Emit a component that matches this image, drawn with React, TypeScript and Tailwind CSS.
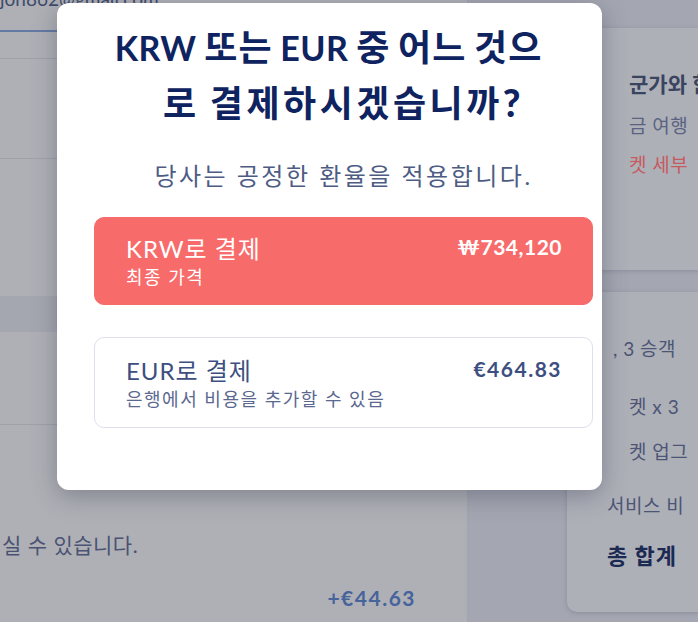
import { useState } from 'react';

const font = { fontFamily: 'Lato, "Noto Sans CJK KR", sans-serif' };

type Option = {
	id: string;
	title: string;
	note: string;
	price: string;
};

const options: Option[] = [
	{ id: 'krw', title: 'KRW로 결제', note: '최종 가격', price: '₩734,120' },
	{ id: 'eur', title: 'EUR로 결제', note: '은행에서 비용을 추가할 수 있음', price: '€464.83' },
];

function PageBehind() {
	return (
		<div className="flex h-full w-full">
			{/* left column */}
			<div className="flex h-full w-[468px] shrink-0 flex-col border-r border-[#a2a5af] bg-[#afb0b6]">
				<div className="h-[30px] overflow-hidden">
					<div className="-mt-[15px] text-[19px] text-[#3e4b6c]">jon862@gmail.com</div>
				</div>
				<div className="h-[2px] w-[300px] bg-[#6479a4]" />
				<div className="h-[27px] border-b border-[#9fa1aa]" />
				<div className="h-[100px] border-b border-[#9fa1aa]" />
				<div className="h-[137px]" />
				<div className="h-[36px] bg-[#a5a7b0]" />
				<div className="h-[93px] border-b border-[#9fa1aa]" />
				<div className="flex flex-1 flex-col pt-[104px]">
					<div className="pl-[2px] text-[21px] tracking-[0.5px] text-[#4a5372]">실 수 있습니다.</div>
					<div className="mt-[21px] pr-[51px] text-right text-[21px] font-bold tracking-[1.5px] text-[#46639c]">
						+€44.63
					</div>
				</div>
			</div>
			{/* right column */}
			<div className="flex min-w-0 flex-1 flex-col overflow-hidden bg-[#a4a7b1] pl-[99px] pt-[28px]">
				<div className="flex h-[242px] flex-col rounded-l-[10px] bg-[#aeb0b8] pl-[62px] pt-[40px] shadow-[0_1px_4px_rgba(60,65,90,0.25)]">
					<div className="whitespace-nowrap text-[21px] font-semibold text-[#39445f]">군가와 함께</div>
					<div className="mt-[12px] whitespace-nowrap text-[19px] tracking-[0.5px] text-[#5a6382]">금 여행</div>
					<div className="mt-[11px] whitespace-nowrap text-[19px] tracking-[0.5px] text-[#c45b60]">켓 세부</div>
				</div>
				<div className="mt-[22px] flex h-[320px] flex-col rounded-l-[10px] bg-[#aeb0b8] pl-[40px] pt-[43px] shadow-[0_1px_4px_rgba(60,65,90,0.25)]">
					<div className="whitespace-nowrap pl-[6px] text-[19px] tracking-[0.5px] text-[#4c5575]">, 3 승객</div>
					<div className="mt-[29px] whitespace-nowrap pl-[22px] text-[19px] tracking-[0.5px] text-[#4c5575]">켓 x 3</div>
					<div className="mt-[17px] whitespace-nowrap pl-[22px] text-[19px] tracking-[0.5px] text-[#4c5575]">켓 업그</div>
					<div className="mt-[25px] whitespace-nowrap text-[19px] tracking-[0.5px] text-[#4c5575]">서비스 비</div>
					<div className="mt-[19px] whitespace-nowrap text-[22px] font-bold tracking-[1px] text-[#1b2a52]">총 합계</div>
				</div>
			</div>
		</div>
	);
}

export default function App() {
	const [selected, setSelected] = useState('krw');

	return (
		<div className="relative h-[622px] w-[698px] overflow-hidden" style={font}>
			<PageBehind />
			<div className="absolute left-[57px] top-[3px] flex h-[487px] w-[545px] flex-col rounded-[12px] bg-white pl-[37px] pr-[9px] pt-[17px] shadow-[0_6px_24px_rgba(40,45,70,0.35)]">
				<h1 className="text-center text-[36px] font-bold leading-[55px] tracking-[1px] text-[#0e2360] [word-spacing:-2px]">
					<span className="block whitespace-nowrap pr-[30px]">
						<span className="text-[34px] tracking-[0.5px]">KRW</span> 또는{' '}
						<span className="text-[34px] tracking-[0.5px]">EUR</span> 중 어느 것으
					</span>
					<span className="block whitespace-nowrap tracking-[3.5px]">
						로 결제하시겠습니까<span className="text-[38px] font-black">?</span>
					</span>
				</h1>
				<p className="mt-[30px] text-center text-[24px] leading-[30px] tracking-[2.5px] text-[#4e5c84]">
					당사는 공정한 환율을 적용합니다.
				</p>
				<div className="mt-[26px] flex w-[499px] flex-col gap-[32px]">
					{options.map((o) => {
						const on = selected === o.id;
						return (
							<button
								key={o.id}
								onClick={() => setSelected(o.id)}
								className={
									on
										? 'flex h-[88px] items-start justify-between rounded-[10px] border border-[#f86b6b] bg-[#f86b6b] pl-[31px] pr-[30px] pt-[16px] text-left text-white'
										: 'flex h-[91px] items-start justify-between rounded-[10px] border border-[#dde0ec] bg-white pl-[31px] pr-[30px] pt-[18px] text-left text-[#3d4f80]'
								}
							>
								<div className="flex flex-col">
									<span className="text-[24px] leading-[30px] tracking-[1px]">{o.title}</span>
									<span
										className={
											on
												? 'text-[18px] leading-[26px] tracking-[1.5px]'
												: 'text-[18px] leading-[26px] tracking-[1.5px] text-[#5b6890]'
										}
									>
										{o.note}
									</span>
								</div>
								<span
									className={
										on
											? 'text-[21px] font-bold leading-[26px] tracking-[0.5px]'
											: 'text-[21px] font-bold leading-[26px] tracking-[1.5px]'
									}
								>
									{o.price}
								</span>
							</button>
						);
					})}
				</div>
			</div>
		</div>
	);
}
